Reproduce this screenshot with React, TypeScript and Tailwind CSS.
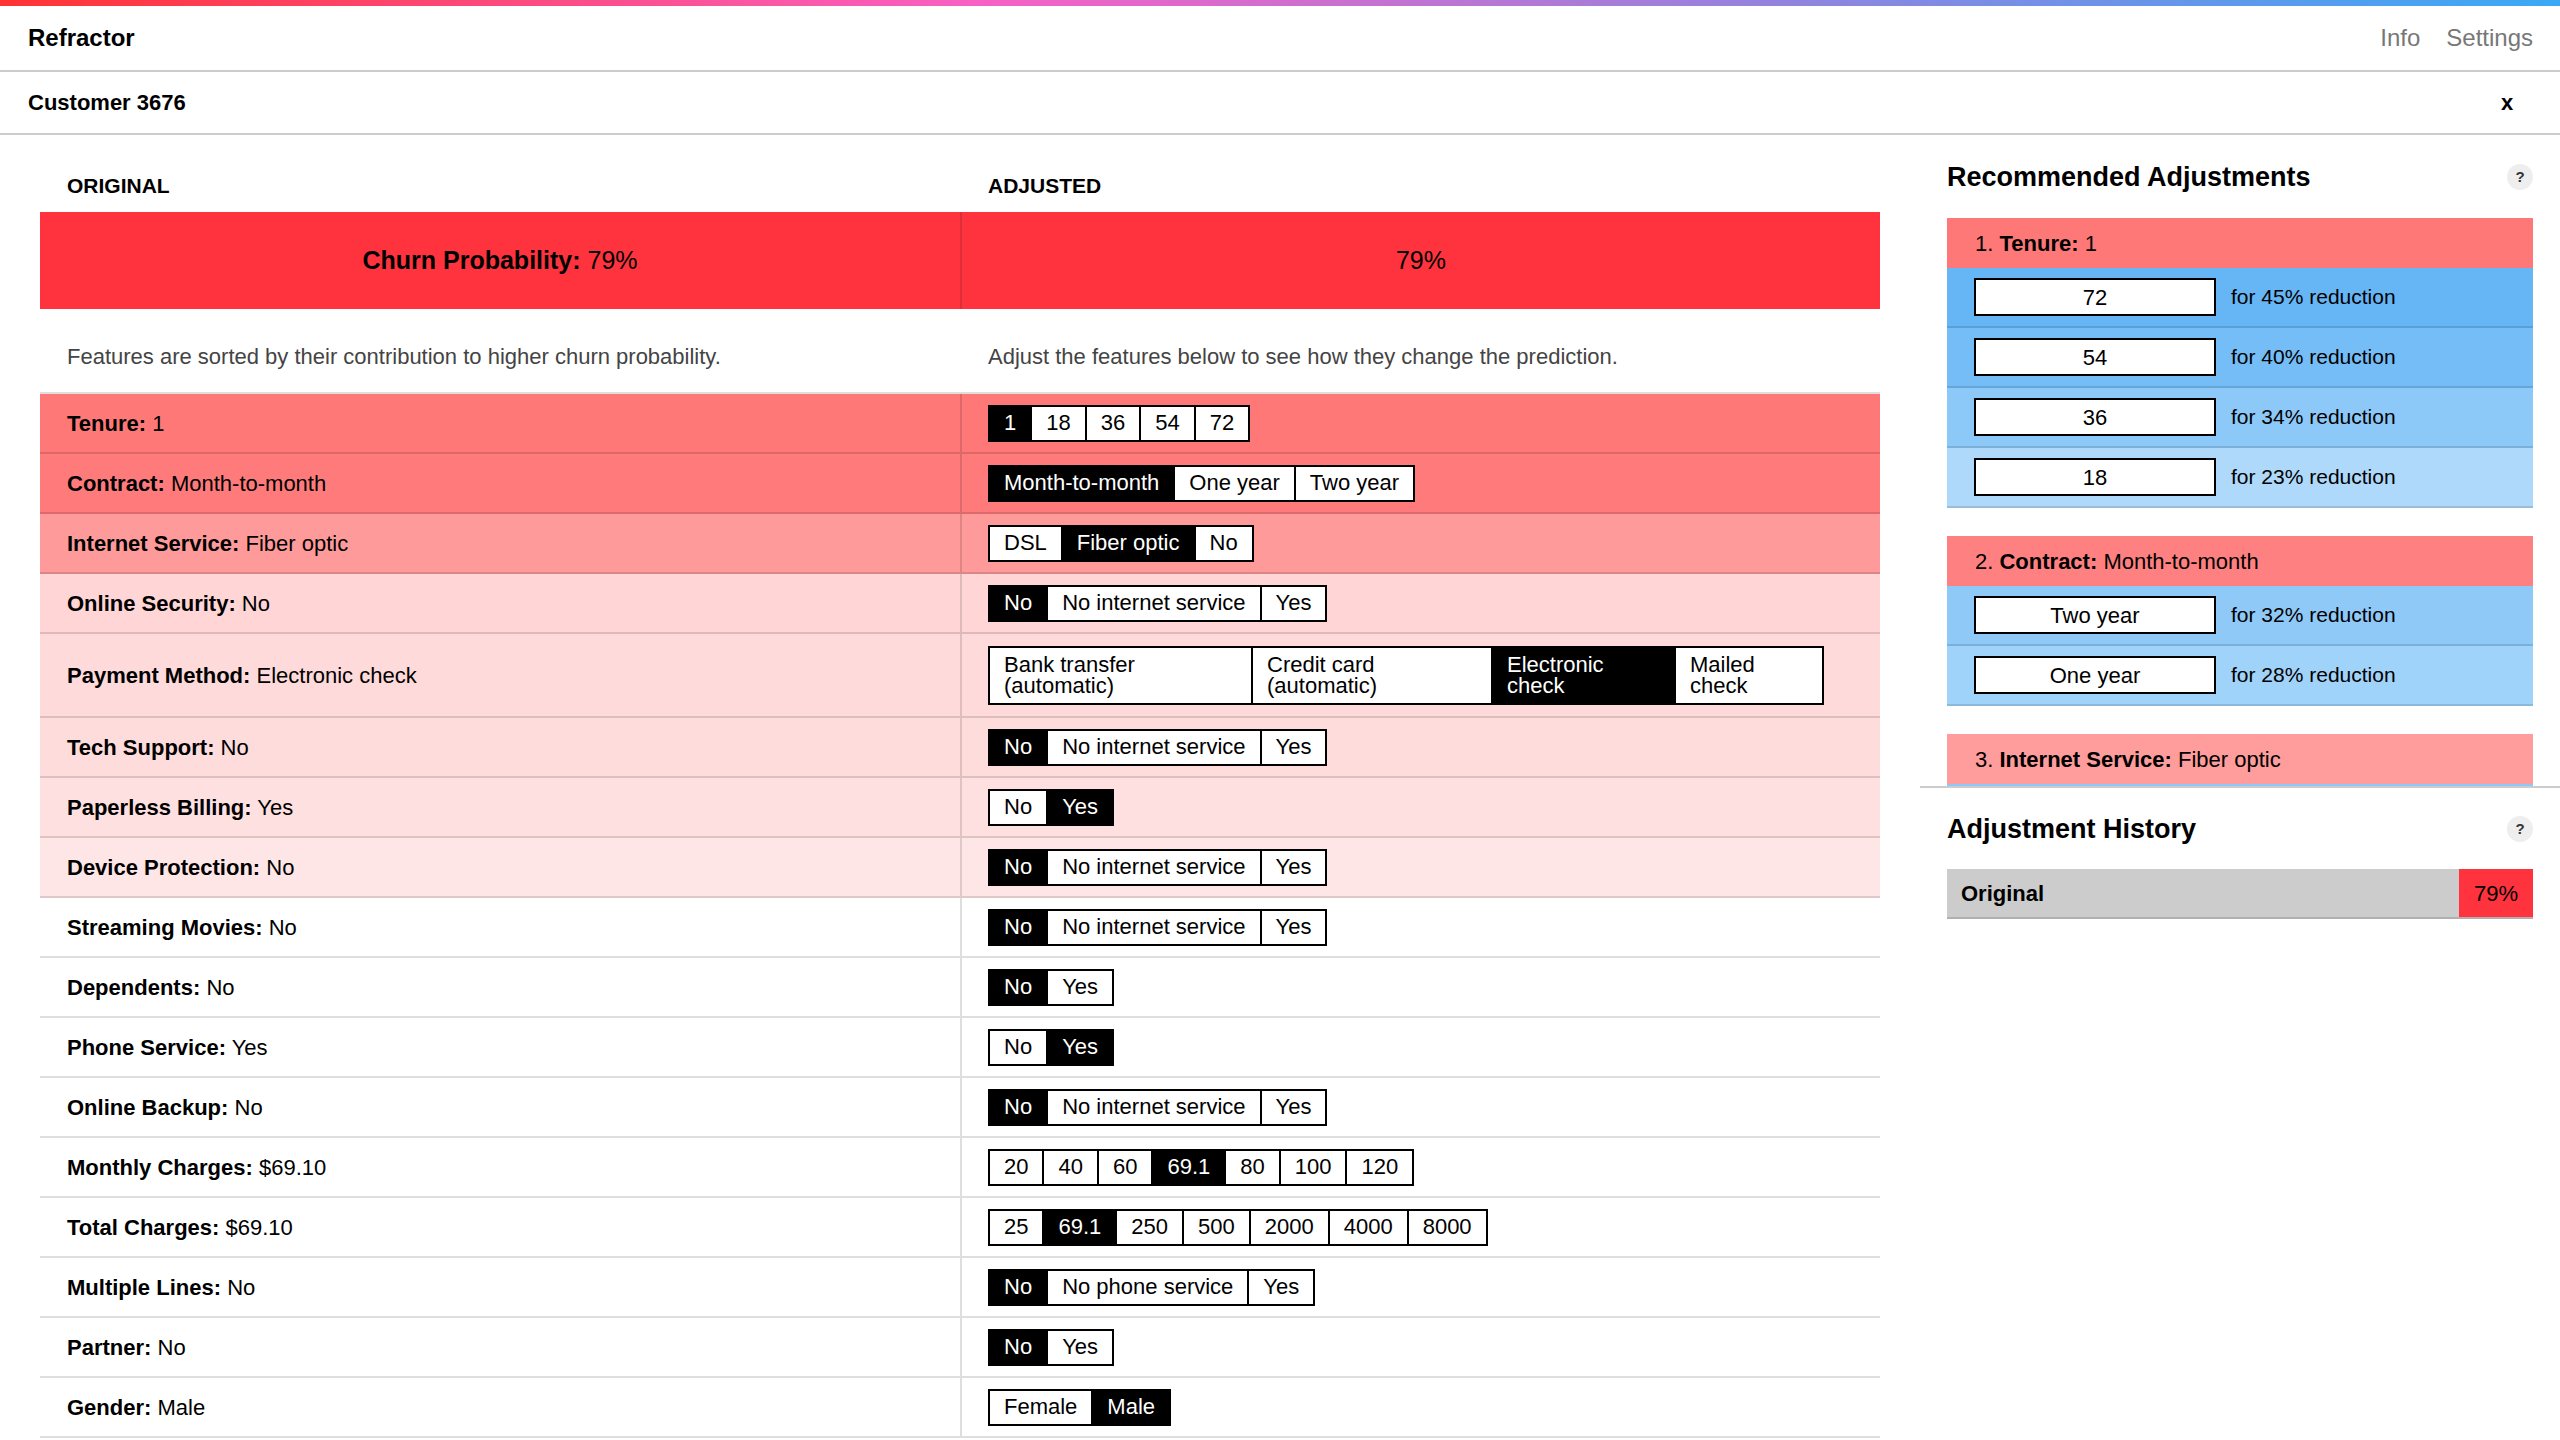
import React from 'react';

interface Feature {
  label: string;
  value: string;
  options: string[];
  selected: number;
  bg: string;
}

const features: Feature[] = [
  { label: 'Tenure', value: '1', options: ['1', '18', '36', '54', '72'], selected: 0, bg: 'bg-[#ff7878]' },
  { label: 'Contract', value: 'Month-to-month', options: ['Month-to-month', 'One year', 'Two year'], selected: 0, bg: 'bg-[#ff7b7b]' },
  { label: 'Internet Service', value: 'Fiber optic', options: ['DSL', 'Fiber optic', 'No'], selected: 1, bg: 'bg-[#ff9a9a]' },
  { label: 'Online Security', value: 'No', options: ['No', 'No internet service', 'Yes'], selected: 0, bg: 'bg-[#ffd5d5]' },
  { label: 'Payment Method', value: 'Electronic check', options: [], selected: 2, bg: 'bg-[#ffdada]' },
  { label: 'Tech Support', value: 'No', options: ['No', 'No internet service', 'Yes'], selected: 0, bg: 'bg-[#ffdcdc]' },
  { label: 'Paperless Billing', value: 'Yes', options: ['No', 'Yes'], selected: 1, bg: 'bg-[#ffe0e0]' },
  { label: 'Device Protection', value: 'No', options: ['No', 'No internet service', 'Yes'], selected: 0, bg: 'bg-[#ffe6e6]' },
  { label: 'Streaming Movies', value: 'No', options: ['No', 'No internet service', 'Yes'], selected: 0, bg: 'bg-white' },
  { label: 'Dependents', value: 'No', options: ['No', 'Yes'], selected: 0, bg: 'bg-white' },
  { label: 'Phone Service', value: 'Yes', options: ['No', 'Yes'], selected: 1, bg: 'bg-white' },
  { label: 'Online Backup', value: 'No', options: ['No', 'No internet service', 'Yes'], selected: 0, bg: 'bg-white' },
  { label: 'Monthly Charges', value: '$69.10', options: ['20', '40', '60', '69.1', '80', '100', '120'], selected: 3, bg: 'bg-white' },
  { label: 'Total Charges', value: '$69.10', options: ['25', '69.1', '250', '500', '2000', '4000', '8000'], selected: 1, bg: 'bg-white' },
  { label: 'Multiple Lines', value: 'No', options: ['No', 'No phone service', 'Yes'], selected: 0, bg: 'bg-white' },
  { label: 'Partner', value: 'No', options: ['No', 'Yes'], selected: 0, bg: 'bg-white' },
  { label: 'Gender', value: 'Male', options: ['Female', 'Male'], selected: 1, bg: 'bg-white' },
];

const payments = [
  { lines: ['Bank transfer', '(automatic)'], w: 'w-[261px]' },
  { lines: ['Credit card', '(automatic)'], w: 'w-[240px]' },
  { lines: ['Electronic', 'check'], w: 'w-[183px]' },
  { lines: ['Mailed', 'check'], w: 'w-[148px]' },
];

interface Rec {
  label: string;
  value: string;
  bg: string;
  options: { value: string; pct: number; bg: string }[];
}

const recommendations: Rec[] = [
  {
    label: 'Tenure',
    value: '1',
    bg: 'bg-[#ff7878]',
    options: [
      { value: '72', pct: 45, bg: 'bg-[#66b6f6]' },
      { value: '54', pct: 40, bg: 'bg-[#74bdf7]' },
      { value: '36', pct: 34, bg: 'bg-[#8cc9f8]' },
      { value: '18', pct: 23, bg: 'bg-[#aed9fa]' },
    ],
  },
  {
    label: 'Contract',
    value: 'Month-to-month',
    bg: 'bg-[#ff8080]',
    options: [
      { value: 'Two year', pct: 32, bg: 'bg-[#8ec9f8]' },
      { value: 'One year', pct: 28, bg: 'bg-[#a0d3f9]' },
    ],
  },
  {
    label: 'Internet Service',
    value: 'Fiber optic',
    bg: 'bg-[#ff9c9c]',
    options: [],
  },
];

const HelpDot = () => (
  <div className="w-[26px] h-[26px] rounded-full bg-[#eeeeee] flex items-center justify-center text-[15px] font-bold text-[#333]">
    ?
  </div>
);

const Segments = ({ options, selected }: { options: string[]; selected: number }) => (
  <div className="flex border-2 border-black bg-white">
    {options.map((o, i) => (
      <button
        key={o}
        className={`h-[33px] px-[14px] flex items-center text-[22px] leading-none whitespace-nowrap ${
          i > 0 ? 'border-l-2 border-black' : ''
        } ${i === selected ? 'bg-black text-white' : 'bg-white text-black'}`}
      >
        {o}
      </button>
    ))}
  </div>
);

const PaymentSegments = ({ selected }: { selected: number }) => (
  <div className="flex border-2 border-black bg-white">
    {payments.map((p, i) => (
      <button
        key={p.lines[0]}
        className={`${p.w} h-[55px] px-[14px] flex flex-col justify-center items-start text-left text-[22px] leading-[21px] ${
          i > 0 ? 'border-l-2 border-black' : ''
        } ${i === selected ? 'bg-black text-white' : 'bg-white text-black'}`}
      >
        <span>{p.lines[0]}</span>
        <span>{p.lines[1]}</span>
      </button>
    ))}
  </div>
);

export default function App() {
  return (
    <div className="w-[2560px] bg-white text-black font-['Liberation_Sans',Arial,sans-serif]">
      {/* Top gradient */}
      <div className="h-[6px] bg-[linear-gradient(to_right,#ff3333,#f860c4_38%,#8a86e0_72%,#3aa9f5)]" />

      {/* Header */}
      <div className="h-[66px] flex items-center justify-between pl-[28px] pr-[27px] border-b-2 border-[#cccccc]">
        <span className="text-[24px] font-bold">Refractor</span>
        <div className="flex items-center gap-[26px] text-[24px] text-[#777777]">
          <span>Info</span>
          <span>Settings</span>
        </div>
      </div>

      {/* Customer */}
      <div className="h-[63px] flex items-center justify-between pl-[28px] pr-[36px] border-b-2 border-[#cccccc]">
        <span className="text-[22px] font-bold">Customer 3676</span>
        <button className="w-[34px] h-[34px] flex items-center justify-center text-[22px] font-bold">x</button>
      </div>

      <div className="flex">
        {/* Main */}
        <div className="w-[1920px] px-[40px] pt-[31px]">
          <div className="grid grid-cols-2 h-[40px] mb-[6px] text-[21px] font-bold">
            <div className="flex items-center pl-[27px]">ORIGINAL</div>
            <div className="flex items-center pl-[28px]">ADJUSTED</div>
          </div>

          <div className="grid grid-cols-2 h-[97px] bg-[#ff333d] text-[25px]">
            <div className="flex items-center justify-center">
              <span>
                <b>Churn Probability:</b> 79%
              </span>
            </div>
            <div className="flex items-center justify-center border-l-2 border-[#dc2f38]">79%</div>
          </div>

          <div className="grid grid-cols-2 h-[83px] pt-[11px] text-[22px] text-[#444444]">
            <div className="flex items-center pl-[27px]">Features are sorted by their contribution to higher churn probability.</div>
            <div className="flex items-center pl-[28px]">Adjust the features below to see how they change the prediction.</div>
          </div>

          <div className="border-t-2 border-black/[0.13]">
            {features.map((f) => (
              <div key={f.label} className={`grid grid-cols-2 border-b-2 border-black/[0.13] ${f.bg}`}>
                <div className={`flex items-center pl-[27px] text-[22px] ${f.options.length ? 'h-[58px]' : 'h-[82px]'}`}>
                  <span>
                    <b>{f.label}:</b> {f.value}
                  </span>
                </div>
                <div className="flex items-center pl-[26px] border-l-2 border-black/[0.13]">
                  {f.options.length ? (
                    <Segments options={f.options} selected={f.selected} />
                  ) : (
                    <PaymentSegments selected={f.selected} />
                  )}
                </div>
              </div>
            ))}
          </div>
        </div>

        {/* Sidebar */}
        <div className="w-[640px] flex flex-col">
          <div className="h-[651px] overflow-hidden pt-[22px] px-[27px]">
            <div className="flex items-center justify-between h-[40px] mb-[21px]">
              <h2 className="text-[27px] font-bold">Recommended Adjustments</h2>
              <HelpDot />
            </div>

            {recommendations.map((r, idx) => (
              <div key={r.label} className="mb-[28px]">
                <div className={`h-[50px] flex items-center pl-[28px] text-[22px] ${r.bg}`}>
                  <span>
                    {idx + 1}. <b>{r.label}:</b> {r.value}
                  </span>
                </div>
                {r.options.map((o) => (
                  <div key={o.value} className={`h-[60px] flex items-center pl-[27px] border-b-2 border-black/[0.12] ${o.bg}`}>
                    <div className="w-[242px] h-[38px] border-2 border-black bg-white flex items-center justify-center text-[22px]">
                      {o.value}
                    </div>
                    <span className="ml-[15px] text-[21px]">for {o.pct}% reduction</span>
                  </div>
                ))}
                {r.options.length === 0 && <div className="h-[60px] bg-[#8cc9f8]" />}
              </div>
            ))}
          </div>

          <div className="border-t-2 border-[#cccccc] pt-[21px] px-[27px]">
            <div className="flex items-center justify-between h-[40px] mb-[20px]">
              <h2 className="text-[27px] font-bold">Adjustment History</h2>
              <HelpDot />
            </div>
            <div className="flex h-[50px] bg-[#cccccc] border-b-2 border-[#b0b0b0]">
              <div className="flex-1 flex items-center pl-[14px] text-[22px] font-bold">Original</div>
              <div className="w-[74px] bg-[#ff333d] flex items-center justify-center text-[22px]">79%</div>
            </div>
          </div>
        </div>
      </div>
    </div>
  );
}
